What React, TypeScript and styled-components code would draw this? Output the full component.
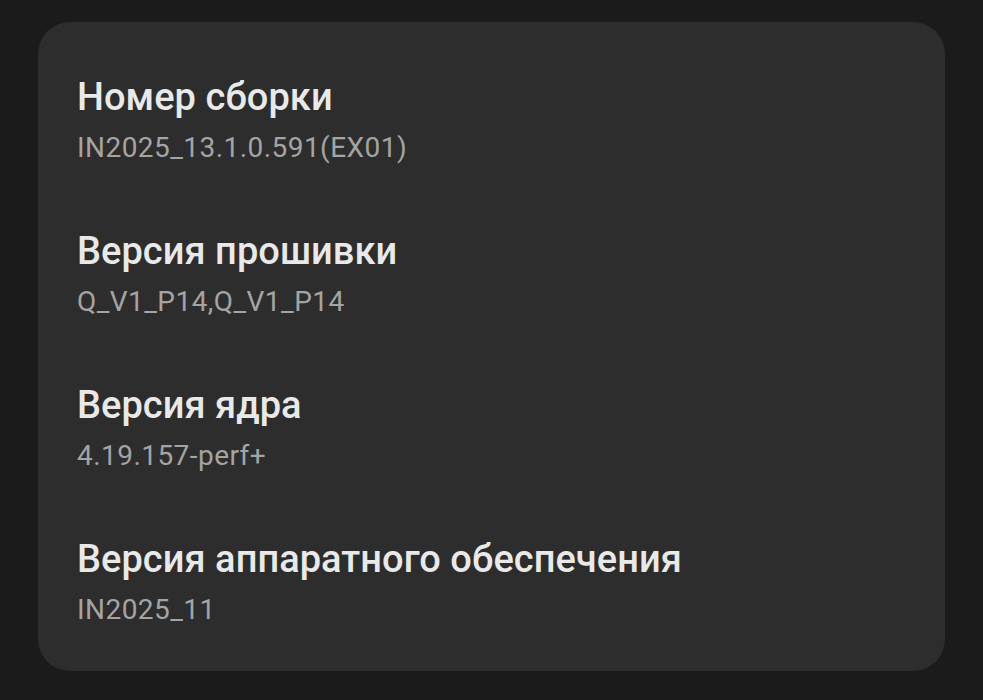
import React from "react";
import styled, { createGlobalStyle } from "styled-components";

const GlobalStyle = createGlobalStyle`
  html, body {
    margin: 0;
    padding: 0;
    background: #1b1b1b;
    font-family: Roboto, "Noto Sans", sans-serif;
  }
`;

const Page = styled.div`
  padding: 22px 38px 29px 38px;
  height: 700px;
  box-sizing: border-box;
`;

const Card = styled.div`
  background: #2d2d2d;
  border-radius: 32px;
  height: 649px;
  box-sizing: border-box;
  padding: 52px 39px 0 39px;
  display: flex;
  flex-direction: column;
  gap: 62px;
`;

const Item = styled.div`
  display: flex;
  flex-direction: column;
  gap: 10px;
`;

const Title = styled.div`
  color: #e9e9e9;
  font-size: 38px;
  font-weight: 500;
  line-height: 46px;
  letter-spacing: 0.05px;
`;

const Value = styled.div`
  color: #a4a4a4;
  font-size: 28px;
  font-weight: 400;
  line-height: 36px;
  letter-spacing: 0.45px;
`;

const rows = [
  { title: "Номер сборки", value: "IN2025_13.1.0.591(EX01)" },
  { title: "Версия прошивки", value: "Q_V1_P14,Q_V1_P14" },
  { title: "Версия ядра", value: "4.19.157-perf+" },
  { title: "Версия аппаратного обеспечения", value: "IN2025_11" },
];

const App = () => {
  return (
    <>
      <GlobalStyle />
      <Page>
        <Card>
          {rows.map((r) => (
            <Item key={r.title}>
              <Title>{r.title}</Title>
              <Value>{r.value}</Value>
            </Item>
          ))}
        </Card>
      </Page>
    </>
  );
};

export default App;
